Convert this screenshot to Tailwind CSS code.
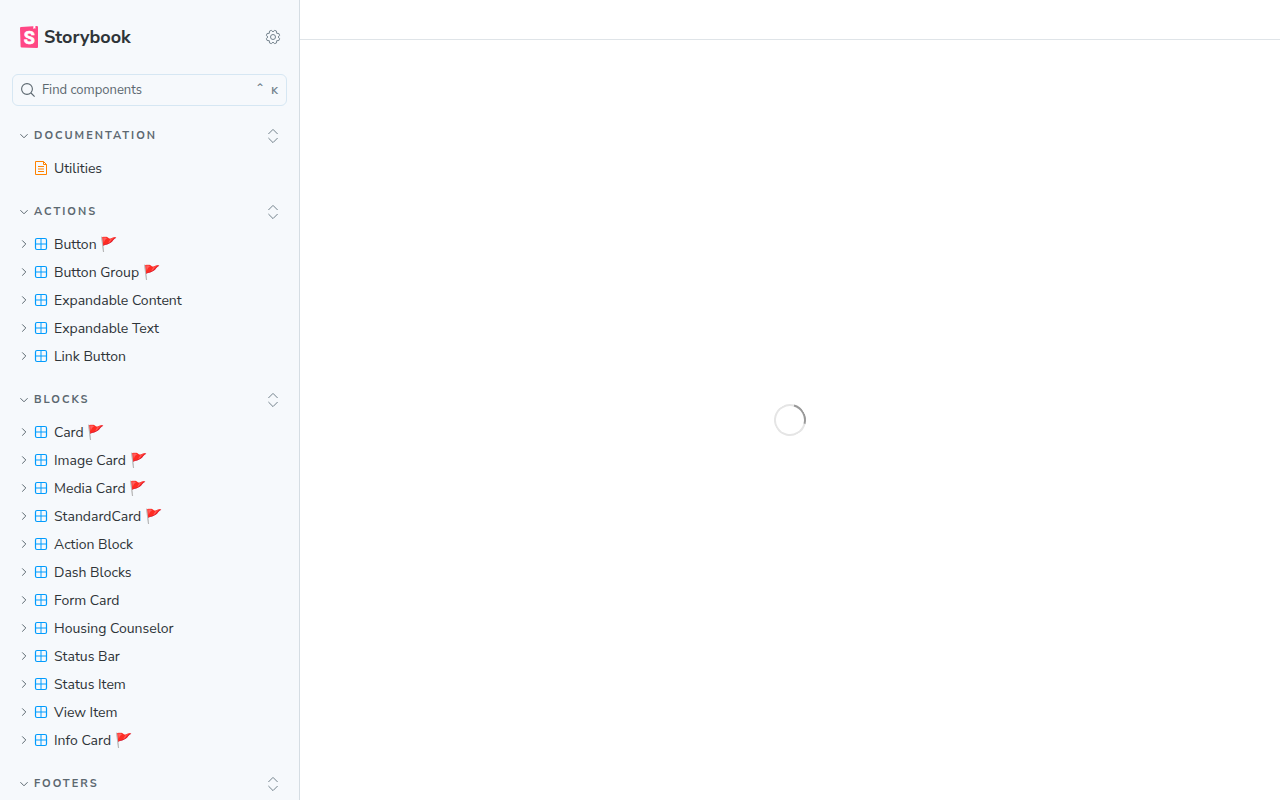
<!DOCTYPE html>
<html lang="en">
<head>
    <meta charset="UTF-8">
    <meta name="viewport" content="width=device-width, initial-scale=1.0">
    <title>Storybook</title>
    <script src="https://cdn.jsdelivr.net/npm/@tailwindcss/browser@4"></script>
    <script>
        const sections = [
            { name: "Documentation", docs: true, items: ["Utilities"] },
            { name: "Actions", items: ["Button 🚩", "Button Group 🚩", "Expandable Content", "Expandable Text", "Link Button"] },
            { name: "Blocks", items: ["Card 🚩", "Image Card 🚩", "Media Card 🚩", "StandardCard 🚩", "Action Block", "Dash Blocks", "Form Card", "Housing Counselor", "Status Bar", "Status Item", "View Item", "Info Card 🚩"] },
            { name: "Footers", items: [] }
        ];

        function itemRow(label, docs) {
            if (docs) {
                return `<li><a href="#" class="flex h-7 items-center gap-1.5 pl-[34px] hover:bg-sky-100">
                    <svg class="size-3.5 text-[#ff8300]"><use href="#icon-document"/></svg>
                    <span class="pt-0.5">${label}</span>
                </a></li>`;
            }
            return `<li><button type="button" aria-expanded="false" class="flex h-7 w-full items-center gap-1.5 pl-5 text-left hover:bg-sky-100">
                <svg class="size-2 text-[#5c6870]"><use href="#icon-right"/></svg>
                <svg class="size-3.5 text-[#029cfd]"><use href="#icon-component"/></svg>
                <span class="pt-0.5">${label}</span>
            </button></li>`;
        }

        document.addEventListener("DOMContentLoaded", () => {
            document.getElementById("tree").innerHTML = sections.map(section => `
                <section class="mt-4">
                    <div class="mb-1 flex h-7 items-center justify-between pr-[19px] pl-5">
                        <button type="button" aria-expanded="true" class="flex items-center gap-1.5 text-[11px] leading-4 font-bold tracking-[2px] text-[#5c6870] uppercase">
                            <svg class="size-2 text-[#5c6870]"><use href="#icon-down"/></svg>
                            ${section.name}
                        </button>
                        <button type="button" aria-label="Expand all" class="text-[#73828c]">
                            <svg class="h-4 w-3.5"><use href="#icon-expand"/></svg>
                        </button>
                    </div>
                    <ul>${section.items.map(item => itemRow(item, section.docs)).join("")}</ul>
                </section>`).join("");
        });
    </script>
</head>
<body class="flex h-screen overflow-hidden bg-white font-['Nunito_Sans','Open_Sans',sans-serif] text-sm text-[#2e3438]">
    <svg class="hidden">
        <symbol id="icon-down" viewBox="0 0 8 8"><path d="M.4 2.2 4 5.8l3.6-3.6" fill="none" stroke="currentColor"/></symbol>
        <symbol id="icon-right" viewBox="0 0 8 8"><path d="M2.2.4 5.8 4 2.2 7.6" fill="none" stroke="currentColor"/></symbol>
        <symbol id="icon-expand" viewBox="0 0 14 16"><path d="M2.4 6 7 1.4 11.6 6M2.4 10 7 14.6l4.6-4.6" fill="none" stroke="currentColor"/></symbol>
        <symbol id="icon-component" viewBox="0 0 14 14">
            <rect x="1.5" y="1.5" width="11" height="11" rx="1.5" fill="none" stroke="currentColor" stroke-width="1.2"/>
            <path d="M7 2v10M2 7h10" fill="none" stroke="currentColor"/>
        </symbol>
        <symbol id="icon-document" viewBox="0 0 14 14">
            <path d="M1.5.5h8l3 3v10h-11zM9.5.5v3h3M4 5.5h6M4 8h6M4 10.5h6" fill="none" stroke="currentColor"/>
        </symbol>
    </svg>

    <aside class="w-[300px] shrink-0 overflow-hidden border-r border-[#d5dde3] bg-[#f6f9fc]">
        <header class="flex h-[74px] items-center justify-between pr-[19px] pl-5">
            <a href="#" class="flex items-center gap-1.5 text-lg font-bold">
                <svg class="h-[22px] w-[18px]" viewBox="0 0 18 22">
                    <path d="M.6 20.4 0 2.2Q0 1.1 1 1L16.7 0Q18 0 18 1.1v19.8Q18 22 16.9 22L1.7 21.4Q.7 21.3.6 20.4z" fill="#ff4785"/>
                    <path d="M13.4 0 15.4 0v2.8l-1-.6-1.1.7z" fill="#fff"/>
                    <text x="9.4" y="17.5" text-anchor="middle" font-family="Liberation Sans Narrow, Roboto, sans-serif" font-size="18" font-weight="700" fill="#fff" stroke="#fff" stroke-width=".6">S</text>
                </svg>
                Storybook
            </a>
            <button type="button" aria-label="Settings" class="text-[#73828c]">
                <svg class="size-3.5 overflow-visible" viewBox="0 0 14 14" fill="none" stroke="currentColor" stroke-linejoin="round">
                    <path d="M13.6 5.3Q10.8 7 13.6 8.7L12.900 10.500Q9.700 9.700 10.500 12.900L8.700 13.600Q7 10.800 5.300 13.600L3.500 12.900Q4.300 9.700 1.100 10.500L.4 8.700Q3.200 7 .4 5.300L1.100 3.500Q4.300 4.300 3.500 1.100L5.300.4Q7 3.200 8.700.4L10.500 1.100Q9.700 4.300 12.900 3.500z"/>
                    <circle cx="7" cy="7" r="2.5"/>
                </svg>
            </button>
        </header>

        <div class="mx-3 flex h-8 items-center gap-[7px] rounded-md border border-[#d6e7f3] px-2 text-[13px] text-[#5c6870]">
            <label for="search" aria-label="Search for components">
                <svg class="size-3.5" viewBox="0 0 14 14" fill="none" stroke="currentColor" stroke-width="1.1">
                    <circle cx="6" cy="6" r="5.4"/>
                    <path d="m10 10 3.6 3.6"/>
                </svg>
            </label>
            <input id="search" type="text" placeholder="Find components" class="h-6 min-w-0 flex-1 leading-6 outline-none placeholder:text-[#5c6870]">
            <kbd class="flex items-center gap-1.5 font-['Nunito_Sans','Open_Sans',sans-serif] text-[10px] leading-4 font-bold text-[#73828c]"><span class="pb-1 text-xs leading-3 font-normal">⌃</span><span class="pt-0.5">K</span></kbd>
        </div>

        <nav id="tree" aria-label="Components"></nav>
    </aside>

    <main class="flex min-w-0 flex-1 flex-col">
        <div class="h-10 shrink-0 border-b border-[#dfe4e8]"></div>
        <div class="flex flex-1 items-center justify-center">
            <div role="status" aria-label="Loading" class="size-8 rotate-60 rounded-full border-2 border-[#e5e5e5] border-t-[#999999]"></div>
        </div>
    </main>
</body>
</html>
